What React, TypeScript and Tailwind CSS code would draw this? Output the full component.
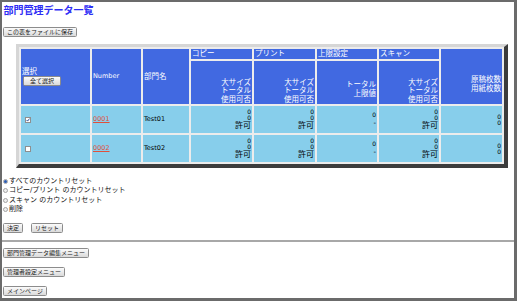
import React from "react";

function Btn({ children, className = "" }: { children: React.ReactNode; className?: string }) {
  return (
    <span
      className={`inline-flex h-[10px] items-center justify-center whitespace-nowrap rounded-[1.5px] border border-[#8c8c8c] bg-gradient-to-b from-[#fbfbfb] to-[#dadada] px-[3px] text-[6px] leading-none text-[#1a1a1a] ${className}`}
    >
      {children}
    </span>
  );
}

function Check({ checked }: { checked?: boolean }) {
  return (
    <span className="relative inline-block h-[6px] w-[6px] border border-[#8f8f8f] bg-white">
      {checked && (
        <svg viewBox="0 0 4 4" className="absolute inset-0 h-full w-full">
          <path d="M0.6 2 L1.6 3.1 L3.5 0.6" stroke="#1d3d8c" strokeWidth="0.9" fill="none" />
        </svg>
      )}
    </span>
  );
}

function Radio({ checked }: { checked?: boolean }) {
  return (
    <span className="inline-flex h-[5px] w-[5px] items-center justify-center rounded-full border border-[#a3a3a3] bg-[#eeeeee]">
      {checked && <span className="h-[3px] w-[3px] rounded-full bg-[#2b5cb3]" />}
    </span>
  );
}

function Zero() {
  return <div className="h-[5.5px] overflow-visible text-[6px] leading-[5.5px]">0</div>;
}

function Counts() {
  return (
    <>
      <Zero />
      <Zero />
      <div className="mt-[1px] text-[8px] leading-[9px]">許可</div>
    </>
  );
}

function DataRow({ num, name, checked }: { num: string; name: string; checked?: boolean }) {
  const cell = "bg-[#87ceeb] p-0 align-middle text-black";
  return (
    <tr>
      <td className={`${cell} h-[27px] pl-[4px]`}>
        <div className="flex items-center">
          <Check checked={checked} />
        </div>
      </td>
      <td className={`${cell} pl-[1px] text-[6.5px]`}>
        <span className="text-[#e0503c] underline">{num}</span>
      </td>
      <td className={`${cell} pl-[1px] text-[6.5px]`}>{name}</td>
      <td className={`${cell} pr-[1px] text-right`}>
        <Counts />
      </td>
      <td className={`${cell} pr-[1px] text-right`}>
        <Counts />
      </td>
      <td className={`${cell} pr-[1px] text-right`}>
        <Zero />
        <div className="mt-[1px] text-[7px] leading-[8px]">-</div>
      </td>
      <td className={`${cell} pr-[1px] text-right`}>
        <Counts />
      </td>
      <td className={`${cell} pr-[1px] text-right`}>
        <Zero />
        <Zero />
      </td>
    </tr>
  );
}

export default function App() {
  const th = "bg-[#4169e1] p-0 font-normal text-white";
  return (
    <div className="box-border h-[301px] w-[517px] overflow-hidden border-t-2 border-l-2 border-r-[3px] border-b-[3px] border-[#6b6b6b] bg-white font-['DejaVu_Sans','Noto_Sans_CJK_JP',sans-serif]">
      <h1 className="ml-[1.5px] mt-[3px] text-[10px] font-bold leading-[12px] text-[#2d2df5]">
        部門管理データ一覧
      </h1>
      <div className="ml-[1px] mt-[10px] flex">
        <Btn>この表をファイルに保存</Btn>
      </div>

      <div className="ml-[14px] mt-[7px] w-fit border-t-[3px] border-l-[3px] border-r-[4px] border-b-[4px] border-t-[#d6d6d6] border-l-[#d6d6d6] border-r-[#3c3c3c] border-b-[#3c3c3c] bg-[#ececec]">
        <table className="w-[485px] table-fixed border-separate border-spacing-[2px] text-[7.5px]">
          <colgroup>
            <col className="w-[69px]" />
            <col className="w-[49px]" />
            <col className="w-[46px]" />
            <col className="w-[61px]" />
            <col className="w-[61px]" />
            <col className="w-[60px]" />
            <col className="w-[60px]" />
            <col className="w-[61px]" />
          </colgroup>
          <thead>
            <tr>
              <th rowSpan={2} className={`${th} pl-[1px] text-left align-middle`}>
                <div className="text-[7.5px] leading-[9px]">選択</div>
                <div className="flex pl-[1px]">
                  <Btn className="px-[6px]">全て選択</Btn>
                </div>
              </th>
              <th rowSpan={2} className={`${th} pl-[1px] text-left align-middle text-[6.5px]`}>
                Number
              </th>
              <th rowSpan={2} className={`${th} pl-[1px] text-left align-middle`}>
                部門名
              </th>
              <th className={`${th} h-[10px] pl-[1px] text-left align-middle leading-[10px]`}>コピー</th>
              <th className={`${th} pl-[1px] text-left align-middle leading-[10px]`}>プリント</th>
              <th className={`${th} pl-[1px] text-left align-middle leading-[10px]`}>上限設定</th>
              <th className={`${th} pl-[1px] text-left align-middle leading-[10px]`}>スキャン</th>
              <th rowSpan={2} className={`${th} pb-[11px] pr-[1px] text-right align-bottom leading-[8.5px]`}>
                原稿枚数
                <br />
                用紙枚数
              </th>
            </tr>
            <tr>
              <th className={`${th} h-[43px] pr-[1px] text-right align-bottom leading-[8.5px]`}>
                大サイズ
                <br />
                トータル
                <br />
                使用可否
              </th>
              <th className={`${th} pr-[1px] text-right align-bottom leading-[8.5px]`}>
                大サイズ
                <br />
                トータル
                <br />
                使用可否
              </th>
              <th className={`${th} pb-[6px] pr-[1px] text-right align-bottom leading-[8.5px]`}>
                トータル
                <br />
                上限値
              </th>
              <th className={`${th} pr-[1px] text-right align-bottom leading-[8.5px]`}>
                大サイズ
                <br />
                トータル
                <br />
                使用可否
              </th>
            </tr>
          </thead>
          <tbody>
            <DataRow num="0001" name="Test01" checked />
            <DataRow num="0002" name="Test02" />
          </tbody>
        </table>
      </div>

      <div className="ml-[1px] mt-[8.5px] text-[7px] leading-[9.5px] text-[#111]">
        <div className="flex h-[9.5px] items-center gap-[1px]">
          <Radio checked />
          <span>すべてのカウントリセット</span>
        </div>
        <div className="flex h-[9.5px] items-center gap-[1px]">
          <Radio />
          <span>コピー/プリント のカウントリセット</span>
        </div>
        <div className="flex h-[9.5px] items-center gap-[1px]">
          <Radio />
          <span>スキャン のカウントリセット</span>
        </div>
        <div className="flex h-[9.5px] items-center gap-[1px]">
          <Radio />
          <span>削除</span>
        </div>
      </div>

      <div className="ml-[1px] mt-[8.5px] flex gap-[8px]">
        <Btn>決定</Btn>
        <Btn>リセット</Btn>
      </div>

      <div className="mt-[7px] h-[2px] bg-[#a8a8a8]" />

      <div className="ml-[1px] mt-[6px] flex">
        <Btn>部門管理データ編集メニュー</Btn>
      </div>
      <div className="ml-[1px] mt-[9px] flex">
        <Btn>管理者設定メニュー</Btn>
      </div>
      <div className="ml-[1px] mt-[9px] flex">
        <Btn>メインページ</Btn>
      </div>
    </div>
  );
}
